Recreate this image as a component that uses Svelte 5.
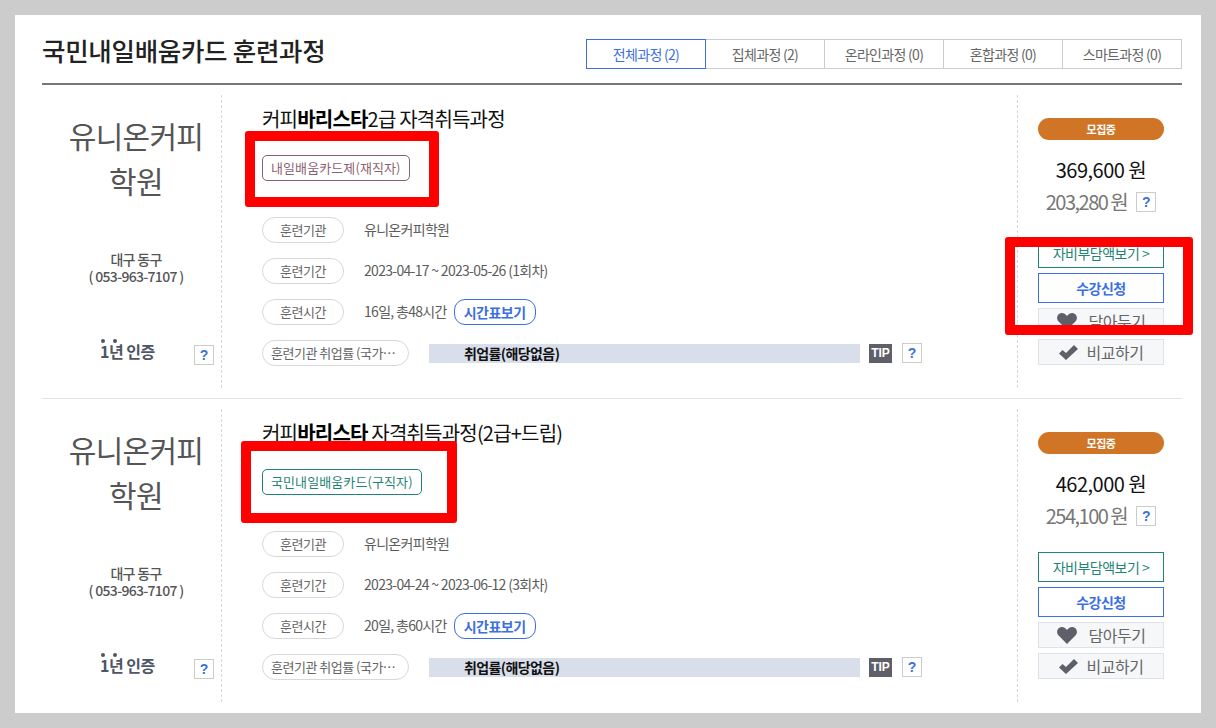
<script>
  const tabs = [
    { label: "전체과정 (2)", active: true },
    { label: "집체과정 (2)" },
    { label: "온라인과정 (0)" },
    { label: "혼합과정 (0)" },
    { label: "스마트과정 (0)" }
  ];

  const courses = [
    {
      pre: "커피",
      bold: "바리스타",
      post: "2급 자격취득과정",
      badge: "내일배움카드제(재직자)",
      badgeType: "worker",
      period: "2023-04-17 ~ 2023-05-26 (1회차)",
      hours: "16일, 총48시간",
      price: "369,600 원",
      self: "203,280 원"
    },
    {
      pre: "커피",
      bold: "바리스타",
      post: " 자격취득과정(2급+드립)",
      badge: "국민내일배움카드(구직자)",
      badgeType: "seeker",
      period: "2023-04-24 ~ 2023-06-12 (3회차)",
      hours: "20일, 총60시간",
      price: "462,000 원",
      self: "254,100 원"
    }
  ];
</script>

<div class="page">
  <div class="head">
    <h1>국민내일배움카드 훈련과정</h1>
    <div class="tabs">
      {#each tabs as tab}
        <div class="tab" class:active={tab.active}>{tab.label}</div>
      {/each}
    </div>
  </div>

  {#each courses as c, i}
    <div class="course" class:first={i === 0}>
      <div class="org">
        <div class="org-name">유니온커피<br />학원</div>
        <div class="org-addr">
          <div>대구 동구</div>
          <div>( 053-963-7107 )</div>
        </div>
        <div class="org-cert">
          <span class="cert-text"><span class="dots">1년</span> 인증</span>
          <span class="help">?</span>
        </div>
      </div>

      <div class="info">
        <div class="title">{c.pre}<b>{c.bold}</b>{c.post}</div>
        <div class="badge-row"><span class="badge {c.badgeType}">{c.badge}</span></div>
        <div class="line">
          <span class="pill">훈련기관</span>
          <span class="val">유니온커피학원</span>
        </div>
        <div class="line">
          <span class="pill">훈련기간</span>
          <span class="val">{c.period}</span>
        </div>
        <div class="line">
          <span class="pill">훈련시간</span>
          <span class="val">{c.hours}</span>
          <span class="timetable">시간표보기</span>
        </div>
        <div class="line rate">
          <span class="pill wide">훈련기관 취업률 (국가…</span>
          <div class="bar">취업률(해당없음)</div>
          <span class="tip">TIP</span>
          <span class="help">?</span>
        </div>
      </div>

      <div class="side">
        <div class="status">모집중</div>
        <div class="price">{c.price}</div>
        <div class="self">
          <span>{c.self}</span>
          <span class="help">?</span>
        </div>
        <div class="btn outline-green">자비부담액보기 &gt;</div>
        <div class="btn outline-blue">수강신청</div>
        <div class="btn soft">
          <svg width="20" height="17" viewBox="0 0 20 17"><path d="M10 17 L1.6 8.6 C-0.6 6.2 -0.3 2.6 2 1 C4.4 -0.7 7.8 0 10 3 C12.2 0 15.6 -0.7 18 1 C20.3 2.6 20.6 6.2 18.4 8.6 Z" fill="#5f5f69" /></svg>
          <span class="heart-label">담아두기</span>
        </div>
        <div class="btn soft">
          <svg width="19" height="15" viewBox="0 0 19 15"><path d="M0 8.5 L3.5 5 L7 8 L15 0 L19 4 L7 15 Z" fill="#5f5f69" /></svg>
          <span class="check-label">비교하기</span>
        </div>
      </div>
    </div>
  {/each}

  <!-- red markup drawn on top of the screenshot -->
  <div class="mark m1"></div>
  <div class="mark m2"></div>
  <div class="mark m3"></div>
</div>

<style>
  :global(body) {
    margin: 0;
    background: #cccccc;
  }

  .page {
    position: relative;
    box-sizing: border-box;
    width: 1186px;
    height: 698px;
    margin: 15px 0 0 15px;
    padding: 0 19px 0 27px;
    background: #fff;
    overflow: hidden;
    font-family: "Noto Sans CJK KR", "Noto Sans", sans-serif;
    color: #555;
    letter-spacing: -0.5px;
  }

  .head {
    display: flex;
    justify-content: space-between;
    align-items: flex-end;
    height: 54px;
    padding-bottom: 14px;
    border-bottom: 2px solid #777;
  }

  h1 {
    margin: 0 0 1px;
    font-size: 25.5px;
    line-height: 36px;
    font-weight: 500;
    color: #222;
    letter-spacing: -0.3px;
  }

  .tabs {
    display: flex;
  }

  .tab {
    box-sizing: border-box;
    width: 120px;
    height: 30px;
    margin-left: -1px;
    border: 1px solid #ccc;
    font-size: 14px;
    line-height: 28px;
    text-align: center;
    color: #666;
    letter-spacing: -0.7px;
  }

  .tab.active {
    position: relative;
    border-color: #3c6fe0;
    color: #3c6fe0;
  }

  .course {
    display: flex;
    height: 293px;
    padding: 10px 0;
    border-top: 1px solid #e4e4e4;
  }

  .course.first {
    border-top: 0;
  }

  .org {
    position: relative;
    box-sizing: border-box;
    width: 180px;
    border-right: 1px dashed #d8d8d8;
    text-align: center;
  }

  .org-name {
    margin: 18px 9px 0 18px;
    font-size: 30px;
    line-height: 45px;
    font-weight: 400;
    color: #555;
    letter-spacing: -0.7px;
  }

  .org-addr {
    margin: 48px 9px 0 18px;
    font-size: 14px;
    line-height: 17px;
    font-weight: 500;
    color: #555;
    letter-spacing: -0.7px;
  }

  .org-cert {
    display: flex;
    align-items: flex-start;
    justify-content: space-between;
    margin: 56px 7px 0 58px;
  }

  .cert-text {
    font-size: 16px;
    line-height: 20px;
    font-weight: 700;
    color: #4f5565;
  }

  .dots {
    position: relative;
  }

  .dots::before,
  .dots::after {
    content: "";
    position: absolute;
    top: 0;
    width: 4px;
    height: 4px;
    border-radius: 50%;
    background: #4f5565;
  }

  .dots::before {
    left: 1px;
  }

  .dots::after {
    left: 13px;
  }

  .help {
    display: inline-block;
    flex: none;
    box-sizing: border-box;
    width: 20px;
    height: 20px;
    border: 1px solid #ccc;
    font-size: 14px;
    line-height: 18px;
    font-weight: 700;
    text-align: center;
    color: #3c6fe0;
    font-family: "Liberation Sans", sans-serif;
    letter-spacing: 0;
  }

  .org .help {
    margin-top: 4px;
  }

  .info {
    flex: 1;
    padding-left: 40px;
  }

  .title {
    margin-top: 10px;
    font-size: 20px;
    line-height: 28px;
    color: #111;
    letter-spacing: -0.8px;
  }

  .title b {
    font-weight: 700;
    color: #000;
  }

  .badge-row {
    height: 26px;
    margin-top: 21px;
    margin-bottom: 37px;
  }

  .badge {
    display: inline-block;
    box-sizing: border-box;
    height: 26px;
    padding: 0 8px;
    border: 1px solid;
    border-radius: 5px;
    font-size: 13px;
    line-height: 24px;
    letter-spacing: 0.1px;
    white-space: nowrap;
  }

  .badge.worker {
    border-color: #8d5f73;
    color: #8d5f73;
    width: 148px;
  }

  .badge.seeker {
    border-color: #1f8474;
    color: #1f8474;
    width: 160px;
  }

  .line {
    display: flex;
    align-items: center;
    height: 26px;
    margin-bottom: 15px;
  }

  .pill {
    box-sizing: border-box;
    width: 82px;
    height: 26px;
    border: 1px solid #d8d8d8;
    border-radius: 13px;
    font-size: 13px;
    line-height: 23px;
    text-align: center;
    color: #666;
    white-space: nowrap;
  }

  .pill.wide {
    width: 147px;
    padding-left: 8px;
    text-align: left;
  }

  .val {
    margin-left: 20px;
    font-size: 14px;
    line-height: 24px;
    height: 26px;
    color: #5c5c5c;
    letter-spacing: -0.7px;
  }

  .timetable {
    box-sizing: border-box;
    width: 82px;
    height: 26px;
    margin-left: 7px;
    border: 1px solid #3c6fe0;
    border-radius: 11px;
    font-size: 14px;
    font-weight: 700;
    line-height: 24px;
    text-align: center;
    color: #3c6fe0;
  }

  .rate .bar {
    box-sizing: border-box;
    width: 431px;
    height: 19px;
    margin-left: 20px;
    padding-left: 35px;
    background: #d8deea;
    font-size: 14px;
    font-weight: 700;
    line-height: 19px;
    color: #111;
    letter-spacing: -0.6px;
  }

  .tip {
    width: 23px;
    height: 19px;
    margin-left: 9px;
    background: #5f5f69;
    font-family: "Liberation Sans", sans-serif;
    font-size: 12px;
    font-weight: 700;
    line-height: 19px;
    text-align: center;
    color: #fff;
    letter-spacing: 0;
  }

  .rate .help {
    margin-left: 10px;
  }

  .side {
    box-sizing: border-box;
    width: 165px;
    margin-left: auto;
    padding: 23px 18px 0 20px;
    border-left: 1px dashed #d8d8d8;
    text-align: center;
  }

  .status {
    height: 22px;
    border-radius: 11px;
    background: #d07525;
    font-size: 11px;
    font-weight: 700;
    line-height: 22px;
    color: #fff;
  }

  .price {
    margin-top: 13px;
    font-size: 20px;
    line-height: 34px;
    font-weight: 400;
    color: #111;
  }

  .self {
    display: flex;
    justify-content: center;
    align-items: center;
    gap: 9px;
    margin: -2px 0 19px 0;
    font-size: 20px;
    line-height: 34px;
    color: #777;
    white-space: nowrap;
    letter-spacing: -1.5px;
  }

  .btn {
    box-sizing: border-box;
    display: flex;
    align-items: center;
    justify-content: center;
    height: 30px;
    margin-bottom: 5px;
    border: 1px solid;
    font-size: 14px;
  }

  .outline-green {
    border-color: #1f8474;
    color: #1f8474;
  }

  .outline-blue {
    border-color: #3c6fe0;
    color: #3c6fe0;
    font-weight: 700;
  }

  .soft {
    height: 26px;
    border-color: #dfe2ea;
    background: #f6f7f9;
    font-size: 16px;
    color: #666;
  }

  .heart-label {
    margin-left: 12px;
  }

  .check-label {
    margin-left: 9px;
  }

  .mark {
    position: absolute;
    box-sizing: border-box;
    border: 10px solid #ff0000;
    border-radius: 3px;
  }

  .m1 {
    left: 230px;
    top: 116px;
    width: 194px;
    height: 76px;
  }

  .m2 {
    left: 226px;
    top: 426px;
    width: 216px;
    height: 82px;
  }

  .m3 {
    left: 990px;
    top: 222px;
    width: 188px;
    height: 98px;
  }
</style>
